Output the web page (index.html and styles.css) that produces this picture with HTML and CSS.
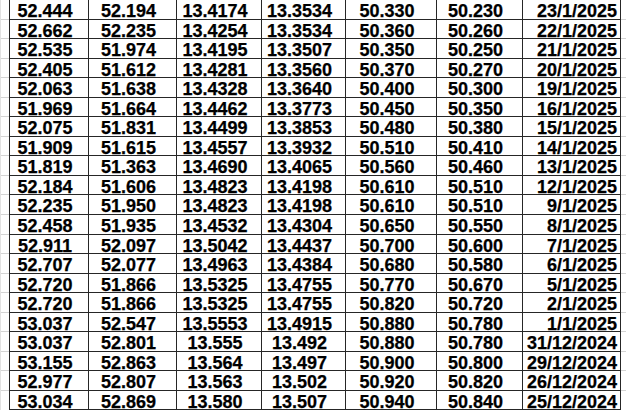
FILE: index.html
```html
<!DOCTYPE html>
<html>
<head>
<meta charset="utf-8">
<link rel="stylesheet" href="styles.css">
</head>
<body>
<div class="sheet">
  <div class="rates">
    <div class="c">52.444</div><div class="c">52.194</div><div class="c">13.4174</div><div class="c">13.3534</div><div class="c">50.330</div><div class="c">50.230</div><div class="c d">23/1/2025</div>
    <div class="c">52.662</div><div class="c">52.235</div><div class="c">13.4254</div><div class="c">13.3534</div><div class="c">50.360</div><div class="c">50.260</div><div class="c d">22/1/2025</div>
    <div class="c">52.535</div><div class="c">51.974</div><div class="c">13.4195</div><div class="c">13.3507</div><div class="c">50.350</div><div class="c">50.250</div><div class="c d">21/1/2025</div>
    <div class="c">52.405</div><div class="c">51.612</div><div class="c">13.4281</div><div class="c">13.3560</div><div class="c">50.370</div><div class="c">50.270</div><div class="c d">20/1/2025</div>
    <div class="c">52.063</div><div class="c">51.638</div><div class="c">13.4328</div><div class="c">13.3640</div><div class="c">50.400</div><div class="c">50.300</div><div class="c d">19/1/2025</div>
    <div class="c">51.969</div><div class="c">51.664</div><div class="c">13.4462</div><div class="c">13.3773</div><div class="c">50.450</div><div class="c">50.350</div><div class="c d">16/1/2025</div>
    <div class="c">52.075</div><div class="c">51.831</div><div class="c">13.4499</div><div class="c">13.3853</div><div class="c">50.480</div><div class="c">50.380</div><div class="c d">15/1/2025</div>
    <div class="c">51.909</div><div class="c">51.615</div><div class="c">13.4557</div><div class="c">13.3932</div><div class="c">50.510</div><div class="c">50.410</div><div class="c d">14/1/2025</div>
    <div class="c">51.819</div><div class="c">51.363</div><div class="c">13.4690</div><div class="c">13.4065</div><div class="c">50.560</div><div class="c">50.460</div><div class="c d">13/1/2025</div>
    <div class="c">52.184</div><div class="c">51.606</div><div class="c">13.4823</div><div class="c">13.4198</div><div class="c">50.610</div><div class="c">50.510</div><div class="c d">12/1/2025</div>
    <div class="c">52.235</div><div class="c">51.950</div><div class="c">13.4823</div><div class="c">13.4198</div><div class="c">50.610</div><div class="c">50.510</div><div class="c d">9/1/2025</div>
    <div class="c">52.458</div><div class="c">51.935</div><div class="c">13.4532</div><div class="c">13.4304</div><div class="c">50.650</div><div class="c">50.550</div><div class="c d">8/1/2025</div>
    <div class="c">52.911</div><div class="c">52.097</div><div class="c">13.5042</div><div class="c">13.4437</div><div class="c">50.700</div><div class="c">50.600</div><div class="c d">7/1/2025</div>
    <div class="c">52.707</div><div class="c">52.077</div><div class="c">13.4963</div><div class="c">13.4384</div><div class="c">50.680</div><div class="c">50.580</div><div class="c d">6/1/2025</div>
    <div class="c">52.720</div><div class="c">51.866</div><div class="c">13.5325</div><div class="c">13.4755</div><div class="c">50.770</div><div class="c">50.670</div><div class="c d">5/1/2025</div>
    <div class="c">52.720</div><div class="c">51.866</div><div class="c">13.5325</div><div class="c">13.4755</div><div class="c">50.820</div><div class="c">50.720</div><div class="c d">2/1/2025</div>
    <div class="c">53.037</div><div class="c">52.547</div><div class="c">13.5553</div><div class="c">13.4915</div><div class="c">50.880</div><div class="c">50.780</div><div class="c d">1/1/2025</div>
    <div class="c">53.037</div><div class="c">52.801</div><div class="c">13.555</div><div class="c">13.492</div><div class="c">50.880</div><div class="c">50.780</div><div class="c d">31/12/2024</div>
    <div class="c">53.155</div><div class="c">52.863</div><div class="c">13.564</div><div class="c">13.497</div><div class="c">50.900</div><div class="c">50.800</div><div class="c d">29/12/2024</div>
    <div class="c">52.977</div><div class="c">52.807</div><div class="c">13.563</div><div class="c">13.502</div><div class="c">50.920</div><div class="c">50.820</div><div class="c d">26/12/2024</div>
    <div class="c">53.034</div><div class="c">52.869</div><div class="c">13.580</div><div class="c">13.507</div><div class="c">50.940</div><div class="c">50.840</div><div class="c d">25/12/2024</div>
  </div>
</div>
</body>
</html>
```
FILE: styles.css
```css
html, body {
  margin: 0;
  padding: 0;
  background: #fff;
}
body {
  width: 626px;
  height: 410px;
  overflow: hidden;
  font-family: "Liberation Sans", Arial, sans-serif;
}
.sheet {
  height: 412px;
  margin-top: -1px;
  background-image: repeating-linear-gradient(to bottom, #d4d4d4 0, #d4d4d4 1px, #fff 1px, #fff 19.55px);
  border-left: 1px solid #e2e2e2;
  box-sizing: border-box;
  padding-left: 8px;
}
.rates {
  display: grid;
  grid-template-columns: 79px 88px 85px 84px 91px 86px 98px;
  grid-auto-rows: 19.55px;
  width: max-content;
  border-left: 1px solid #262626;
  border-top: 1px solid #262626;
  background: #fff;
}
.c {
  box-sizing: border-box;
  border-right: 1px solid #262626;
  border-bottom: 1px solid #262626;
  font-size: 18px;
  font-weight: bold;
  color: #000;
  line-height: 19.55px;
  padding-top: 2px;
  padding-right: 8px;
  text-align: center;
  white-space: nowrap;
  -webkit-text-stroke: 0.25px #000;
}
.c.d {
  text-align: right;
  padding-right: 3px;
}
```
